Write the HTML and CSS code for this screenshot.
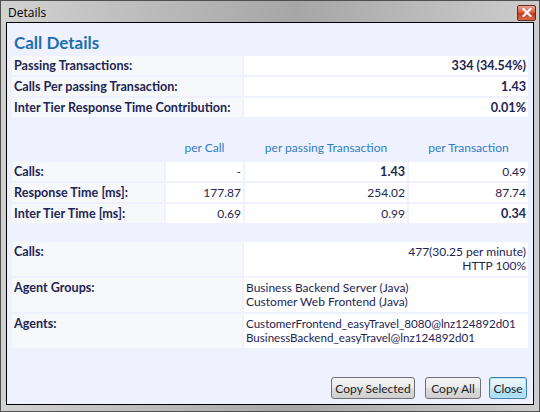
FILE: index.html
```html
<!DOCTYPE html>
<html>
<head>
<meta charset="utf-8">
<link rel="stylesheet" href="styles.css">
</head>
<body>
<div class="window">
  <div class="titlebar">
    <span class="title">Details</span>
    <span class="close-btn"><svg width="10" height="9" viewBox="0 0 10 9"><path d="M1.5 1 L8.5 8 M8.5 1 L1.5 8" stroke="#fff" stroke-width="2.2" stroke-linecap="square"/></svg></span>
  </div>
  <div class="frame">
    <div class="content">
      <h1 class="heading">Call Details</h1>

      <div class="grid2 rows1">
        <div class="cell label">Passing Transactions:</div>
        <div class="cell value bold">334 (34.54%)</div>
        <div class="cell label">Calls Per passing Transaction:</div>
        <div class="cell value bold">1.43</div>
        <div class="cell label">Inter Tier Response Time Contribution:</div>
        <div class="cell value bold">0.01%</div>
      </div>

      <div class="grid4">
        <div class="hdr"></div>
        <div class="hdr">per Call</div>
        <div class="hdr">per passing Transaction</div>
        <div class="hdr">per Transaction</div>

        <div class="cell label">Calls:</div>
        <div class="cell value">-</div>
        <div class="cell value bold">1.43</div>
        <div class="cell value">0.49</div>

        <div class="cell label">Response Time [ms]:</div>
        <div class="cell value">177.87</div>
        <div class="cell value">254.02</div>
        <div class="cell value">87.74</div>

        <div class="cell label">Inter Tier Time [ms]:</div>
        <div class="cell value">0.69</div>
        <div class="cell value">0.99</div>
        <div class="cell value bold">0.34</div>
      </div>

      <div class="grid2 rows3">
        <div class="cell label top">Calls:</div>
        <div class="cell value top">477(30.25 per minute)<br>HTTP 100%</div>
        <div class="cell label top">Agent Groups:</div>
        <div class="cell text top">Business Backend Server (Java)<br>Customer Web Frontend (Java)</div>
        <div class="cell label top">Agents:</div>
        <div class="cell text top agents">CustomerFrontend_easyTravel_8080@lnz124892d01<br>BusinessBackend_easyTravel@lnz124892d01</div>
      </div>

      <div class="buttons">
        <button class="btn btn-sel">Copy Selected</button>
        <button class="btn btn-all">Copy All</button>
        <button class="btn default">Close</button>
      </div>
    </div>
  </div>
</div>
</body>
</html>
```
FILE: styles.css
```css
* { box-sizing: border-box; }
html, body { margin: 0; padding: 0; }
body {
  width: 540px;
  height: 412px;
  font-family: Lato, "Liberation Sans", sans-serif;
  font-size: 12px;
  color: #1e2553;
  background: #fff;
}
.window {
  width: 540px;
  height: 412px;
  border: 1px solid #4f4f4f;
  background: linear-gradient(90deg, #d2d2d2 0%, #b9b9b9 30%, #a6a6a6 55%, #bcbcbc 80%, #cdcdcd 100%);
  display: flex;
  flex-direction: column;
}
.titlebar {
  height: 21px;
  display: flex;
  align-items: center;
  justify-content: space-between;
  padding: 0 3px 0 7px;
}
.title {
  font-family: "Open Sans", sans-serif;
  font-size: 12px;
  color: #000;
  padding-top: 1px;
}
.close-btn {
  width: 19px;
  height: 16px;
  margin-top: 2px;
  border: 1px solid #6b2a1c;
  border-radius: 2px;
  background: linear-gradient(180deg, #e8a58f 0%, #d9603f 45%, #c2391b 55%, #d36e4e 100%);
  display: flex;
  align-items: center;
  justify-content: center;
}
.frame {
  flex: 1;
  padding: 0 5px 6px 5px;
}
.content {
  height: 100%;
  border: 1px solid #000;
  background: #eff2fe;
  padding: 0 5px 0 5px;
  display: flex;
  flex-direction: column;
}
.heading {
  margin: 0;
  height: 33px;
  padding-top: 11px;
  font-size: 17px;
  line-height: 18px;
  font-weight: bold;
  color: #1b6fb0;
  padding-left: 2px;
}
.grid2 {
  display: grid;
  grid-template-columns: 230px 1fr;
  gap: 2px;
}
.rows1 { grid-auto-rows: 19px; }
.rows3 { grid-auto-rows: 34px; margin-top: 19px; }
.grid4 {
  display: grid;
  grid-template-columns: 152px 77px 162px 1fr;
  grid-template-rows: 23px 19px 19px 19px;
  gap: 2px;
  margin-top: 20px;
}
.hdr {
  color: #2f7dc4;
  text-align: center;
  line-height: 21px;
}
.cell {
  line-height: 19px;
  padding: 0 2px;
  white-space: nowrap;
  overflow: hidden;
}
.label {
  background: #f6f8fa;
  font-weight: bold;
  font-size: 12.6px;
}
.value {
  background: #fff;
  text-align: right;
}
.text {
  background: #fff;
}
.bold { font-weight: bold; font-size: 12.6px; }
.top {
  line-height: 14px;
  padding-top: 3px;
}
.agents { font-size: 11.6px; }
.buttons {
  margin-top: auto;
  margin-bottom: 5px;
  display: flex;
  justify-content: flex-end;
  gap: 8px;
  padding-right: 1px;
}
.btn {
  font-family: Lato, "Liberation Sans", sans-serif;
  font-size: 12px;
  color: #1e1e1e;
  height: 22px;
  width: 38px;
  padding: 0;
  border: 1px solid #707070;
  border-radius: 3px;
  background: linear-gradient(180deg, #f3f3f3 0%, #ebebeb 50%, #dddddd 51%, #cfcfcf 100%);
}
.btn-sel { width: 84px; margin-right: 2px; }
.btn-all { width: 56px; }
.btn.default {
  border-color: #3c7fb1;
  background: linear-gradient(180deg, #eaf6fd 0%, #d9f0fc 50%, #bee6fd 51%, #a7d9f5 100%);
  box-shadow: inset 0 0 0 1px #bde4f8;
}
```
